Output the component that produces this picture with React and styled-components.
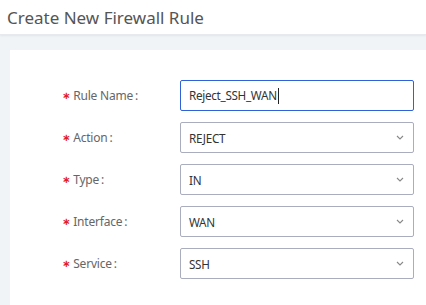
import React from 'react';
import styled, { createGlobalStyle } from 'styled-components';

const Global = createGlobalStyle`
  html, body { margin: 0; padding: 0; }
  body {
    background: #f1f4f7;
    font-family: "Noto Sans", "Open Sans", Arial, sans-serif;
  }
`;

const Header = styled.div`
  box-sizing: border-box;
  height: 35px;
  background: #fff;
  box-shadow: 0 1px 2px rgba(0, 0, 0, 0.06);
  border-bottom: 1px solid #e6e9ee;
  display: flex;
  align-items: center;
  padding-left: 7px;
  font-size: 17px;
  color: #555;
`;

const Main = styled.div`
  box-sizing: border-box;
  padding: 15px 0 0 10px;
  height: 270px;
`;

const Card = styled.div`
  box-sizing: border-box;
  background: #fff;
  height: 100%;
  padding-top: 30px;
  display: flex;
  flex-direction: column;
  gap: 11px;
`;

const Row = styled.div`
  display: flex;
  align-items: center;
`;

const Label = styled.div`
  width: 118px;
  padding-left: 52px;
  font-size: 12px;
  letter-spacing: -0.2px;
  color: #666;
  display: flex;
  align-items: center;
`;

const Star = styled.span`
  color: #e02020;
  margin-right: 3px;
  font-family: "DejaVu Sans", sans-serif;
  font-size: 10px;
  font-weight: bold;
`;

const Colon = styled.span`
  margin-left: 2px;
`;

const Field = styled.div`
  box-sizing: border-box;
  width: 234px;
  height: 31px;
  border: 1px solid ${p => (p.$focused ? '#2f62d9' : '#a9adbd')};
  border-radius: 2px;
  display: flex;
  align-items: center;
  padding: 0 9px 0 8px;
  font-size: 11.7px;
  letter-spacing: -0.3px;
  color: #333;
`;

const Value = styled.span`
  flex: 1;
`;

const Caret = styled.span`
  display: inline-block;
  width: 1px;
  height: 16px;
  background: #222;
  vertical-align: middle;
  margin-left: 1px;
`;

const Chevron = () => (
  <svg width="8" height="5" viewBox="0 0 8 5" fill="none">
    <path d="M1 1l3 3 3-3" stroke="#888" strokeWidth="1.1" />
  </svg>
);

const rows = [
  { label: 'Rule Name', value: 'Reject_SSH_WAN', input: true },
  { label: 'Action', value: 'REJECT' },
  { label: 'Type', value: 'IN' },
  { label: 'Interface', value: 'WAN' },
  { label: 'Service', value: 'SSH' },
];

export default function App() {
  return (
    <>
      <Global />
      <Header>Create New Firewall Rule</Header>
      <Main>
        <Card>
          {rows.map(r => (
            <Row key={r.label}>
              <Label>
                <Star>∗</Star>
                {r.label}
                <Colon>:</Colon>
              </Label>
              <Field $focused={r.input}>
                <Value>
                  {r.value}
                  {r.input && <Caret />}
                </Value>
                {!r.input && <Chevron />}
              </Field>
            </Row>
          ))}
        </Card>
      </Main>
    </>
  );
}
